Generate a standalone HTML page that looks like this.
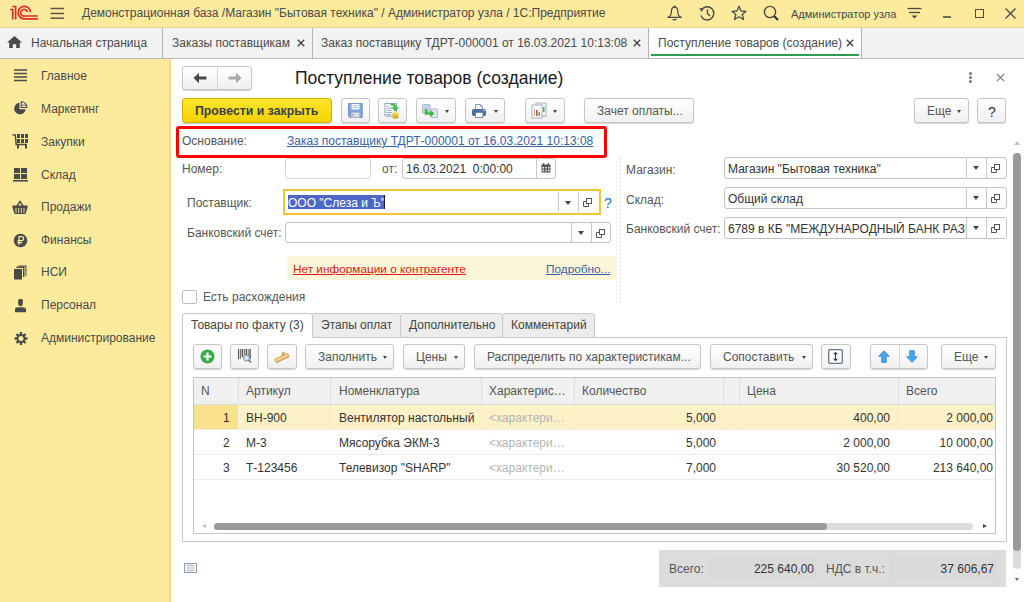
<!DOCTYPE html>
<html><head><meta charset="utf-8">
<style>
*{box-sizing:border-box;margin:0;padding:0}
html,body{width:1024px;height:602px;overflow:hidden;background:#fff;font-family:"Liberation Sans",sans-serif;font-size:12px;color:#4d4d4d}
.a{position:absolute}
.t{position:absolute;white-space:nowrap;line-height:14px}
#top{left:0;top:0;width:1024px;height:28px;background:#fceb9d;border-bottom:1px solid #e8d584}
#tabs{left:0;top:28px;width:1024px;height:31px;background:#f2f2f2;border-bottom:1px solid #b8b8b8}
.tsep{position:absolute;top:28px;width:1px;height:30px;background:#b4b4b4}
#side{left:0;top:59px;width:171px;height:543px;background:#fceb9d;border-right:2px solid #ebda8e}
.si{position:absolute;left:41px;white-space:nowrap;font-size:12px;color:#4a4a4a;line-height:14px}
.btn{position:absolute;border:1px solid #c6c6c6;border-radius:3px;background:linear-gradient(#fff,#f0f0f0);box-shadow:0 1px 1px rgba(0,0,0,.18)}
.inp{position:absolute;border:1px solid #c2c2c2;border-radius:3px;background:#fff}
.dd2{position:absolute;width:0;height:0;border-left:3px solid transparent;border-right:3px solid transparent;border-top:4px solid #444}
.dd{position:absolute;width:0;height:0;border-left:2.5px solid transparent;border-right:2.5px solid transparent;border-top:3px solid #444}
.lbl{position:absolute;white-space:nowrap;line-height:14px;color:#555}
</style></head><body>

<!-- TOP BAR -->
<div id="top" class="a"></div>
<svg class="a" style="left:9px;top:5px" width="32" height="16" viewBox="0 0 32 16">
  <g fill="none" stroke="#e0282e" stroke-width="1.7">
    <path d="M3.2 1.5H7.4M6.6 1.5V14.6M1.1 4.5H4.5M3.7 4.5V14.6"/>
    <path d="M21.6 7.2 A6.25 6.25 0 1 0 16.2 13.8 H28.9"/>
    <path d="M18.4 7.2 A3.4 3.4 0 1 0 16.2 11 H28.9"/>
  </g>
</svg>
<svg class="a" style="left:50px;top:7px" width="15" height="13" viewBox="0 0 15 13">
  <g stroke="#5b5444" stroke-width="1.5"><path d="M0.5 1.5H14"/><path d="M0.5 6.5H14"/><path d="M0.5 11.2H14"/></g>
</svg>
<div class="t" style="left:82px;top:6px;font-size:12px;color:#4a4a4a">Демонстрационная база /Магазин "Бытовая техника" / Администратор узла / 1С:Предприятие</div>

<!-- header icons -->
<svg class="a" style="left:667px;top:4px" width="16" height="17" viewBox="0 0 16 17"><path d="M4.4 8 C4.4 4.6 5.7 3.2 7.6 3.2 C9.5 3.2 10.8 4.6 10.8 8 C10.8 11 12.2 12.5 14.2 13.4 H1 C3 12.5 4.4 11 4.4 8Z" fill="none" stroke="#4a4a4a" stroke-width="1.2" stroke-linejoin="round"/><circle cx="7.6" cy="2.4" r="1" fill="#4a4a4a"/><path d="M5.3 15 A2.3 1.6 0 0 0 9.9 15Z" fill="#4a4a4a"/></svg>
<svg class="a" style="left:698px;top:5px" width="18" height="17" viewBox="0 0 18 17">
  <g fill="none" stroke="#4a4a4a" stroke-width="1.4"><path d="M3.5 5 A6.6 6.6 0 1 1 3 10.5"/><path d="M9.5 4.5V8.5L12 11"/></g>
  <path d="M1 3.5 L5.5 3 L4 7Z" fill="#4a4a4a"/>
</svg>
<svg class="a" style="left:731px;top:5px" width="16" height="16" viewBox="0 0 16 16">
  <path d="M8 1.2 L10 6 L15 6.3 L11.2 9.5 L12.5 14.5 L8 11.8 L3.5 14.5 L4.8 9.5 L1 6.3 L6 6Z" fill="none" stroke="#4a4a4a" stroke-width="1.3" stroke-linejoin="round"/>
</svg>
<svg class="a" style="left:763px;top:5px" width="17" height="17" viewBox="0 0 17 17">
  <circle cx="7" cy="7" r="5.6" fill="none" stroke="#4a4a4a" stroke-width="1.4"/><path d="M11 11 L15 15" stroke="#333" stroke-width="2.2"/>
</svg>
<div class="t" style="left:791px;top:7px;font-size:11px;color:#4a4a4a">Администратор узла</div>
<svg class="a" style="left:907px;top:7px" width="15" height="14" viewBox="0 0 15 14">
  <g stroke="#4a4a4a" stroke-width="1.3"><path d="M0.5 1.5H14.5"/><path d="M2 5.5H13"/></g><path d="M4.5 8.5H10.5L7.5 11.5Z" fill="#4a4a4a"/>
</svg>
<div class="a" style="left:943px;top:16px;width:8px;height:2px;background:#6e6a58"></div>
<div class="a" style="left:975px;top:9px;width:9px;height:9px;border:1.3px solid #4a4a4a"></div>
<svg class="a" style="left:1005px;top:8px" width="11" height="11" viewBox="0 0 11 11"><g stroke="#4a4a4a" stroke-width="1.3"><path d="M0.5 0.5L10.5 10.5M10.5 0.5L0.5 10.5"/></g></svg>

<!-- TABS -->
<div id="tabs" class="a"></div>
<div class="a" style="left:649px;top:28px;width:212px;height:31px;background:#fff;border-bottom:1px solid #b8b8b8"></div>
<div class="a" style="left:651px;top:54px;width:208px;height:2px;background:#2e9b4e"></div>
<div class="tsep" style="left:162px"></div>
<div class="tsep" style="left:312px"></div>
<div class="tsep" style="left:648px"></div>
<div class="tsep" style="left:861px"></div>
<svg class="a" style="left:7px;top:36px" width="15" height="12" viewBox="0 0 15 12"><path d="M7.5 0 L15 6.5 H12.8 V12 H9.2 V8.2 H5.8 V12 H2.2 V6.5 H0Z" fill="#4a4a4a"/></svg>
<div class="t" style="left:31px;top:36px;color:#4a4a4a">Начальная страница</div>
<div class="t" style="left:172px;top:36px;color:#4a4a4a">Заказы поставщикам</div>
<div class="t" style="left:321px;top:36px;color:#4a4a4a">Заказ поставщику ТДРТ-000001 от 16.03.2021 10:13:08</div>
<div class="t" style="left:658px;top:36px;color:#4a4a4a">Поступление товаров (создание)</div>
<svg class="a" style="left:297px;top:39px" width="8" height="8" viewBox="0 0 8 8"><path d="M0.8 0.8L7.2 7.2M7.2 0.8L0.8 7.2" stroke="#444" stroke-width="1.4"/></svg>
<svg class="a" style="left:633px;top:39px" width="8" height="8" viewBox="0 0 8 8"><path d="M0.8 0.8L7.2 7.2M7.2 0.8L0.8 7.2" stroke="#444" stroke-width="1.4"/></svg>
<svg class="a" style="left:846px;top:39px" width="8" height="8" viewBox="0 0 8 8"><path d="M0.8 0.8L7.2 7.2M7.2 0.8L0.8 7.2" stroke="#444" stroke-width="1.4"/></svg>

<!-- SIDEBAR -->
<div id="side" class="a"></div>
<div class="si" style="top:69px">Главное</div>
<div class="si" style="top:102px">Маркетинг</div>
<div class="si" style="top:135px">Закупки</div>
<div class="si" style="top:168px">Склад</div>
<div class="si" style="top:200px">Продажи</div>
<div class="si" style="top:233px">Финансы</div>
<div class="si" style="top:265px">НСИ</div>
<div class="si" style="top:298px">Персонал</div>
<div class="si" style="top:331px">Администрирование</div>
<svg class="a" style="left:13px;top:68px" width="15" height="15" viewBox="0 0 15 15"><g stroke="#4a4a4a" stroke-width="1.6"><path d="M1 2H14M1 5.5H14M1 9H14M1 12.5H14"/></g></svg>
<svg class="a" style="left:13px;top:101px" width="15" height="15" viewBox="0 0 15 15"><path d="M6.5 1.8 A5.8 5.8 0 1 0 12.7 8.3 H6.5Z" fill="#4a4a4a"/><path d="M8.2 0.8 A5.6 5.6 0 0 1 13.9 6.5 H8.2Z" fill="#f4f1e2" stroke="#4a4a4a" stroke-width="1.1"/><path d="M8.6 4.2H13.3" stroke="#4a4a4a" stroke-width="0.9"/></svg>
<svg class="a" style="left:12px;top:134px" width="16" height="15" viewBox="0 0 16 15"><path d="M0.5 1H3.3L4.2 10.6H15" fill="none" stroke="#4a4a4a" stroke-width="1.5"/><g fill="#4a4a4a"><rect x="5" y="0" width="3" height="4"/><rect x="9" y="0" width="3" height="4"/><rect x="13" y="0" width="3" height="4"/><rect x="5" y="5" width="3" height="4"/><rect x="9" y="5" width="3" height="4"/><rect x="13" y="5" width="3" height="4"/><rect x="5" y="11" width="2" height="3.5"/><rect x="13" y="11" width="2" height="3.5"/></g></svg>
<svg class="a" style="left:13px;top:167px" width="15" height="15" viewBox="0 0 15 15"><g fill="#4a4a4a"><rect x="1" y="1" width="6" height="5"/><rect x="8" y="1" width="6" height="5"/><rect x="1" y="7" width="6" height="5"/><rect x="8" y="7" width="6" height="5"/><rect x="0" y="13" width="15" height="1.6"/></g></svg>
<svg class="a" style="left:12px;top:200px" width="16" height="15" viewBox="0 0 16 15"><path d="M5 6 L8 1.5 L11 6" fill="none" stroke="#4a4a4a" stroke-width="1.4"/><path d="M0.5 5.5 H15.5 V7.5 L13.5 14 H2.5 L0.5 7.5Z" fill="#4a4a4a"/><g stroke="#fbea9b" stroke-width="0.9"><path d="M4 8V13M6.7 8V13M9.3 8V13M12 8V13"/></g></svg>
<svg class="a" style="left:13px;top:233px" width="15" height="15" viewBox="0 0 15 15"><circle cx="7.5" cy="7.5" r="6.8" fill="#4a4a4a"/><path d="M6 11.8V3.6H8.6A2 2 0 0 1 8.6 7.6H4.5M4.5 9.6H9" fill="none" stroke="#fbea9b" stroke-width="1.3"/></svg>
<svg class="a" style="left:13px;top:265px" width="15" height="15" viewBox="0 0 15 15"><g fill="#4a4a4a"><rect x="1" y="4" width="8" height="10.5"/><path d="M10 3H3.5V1.5H11.5V12H10Z"/><path d="M12.5 0.5H5.5V-0.5H13.5V10H12.5Z" transform="translate(0,1)"/></g></svg>
<svg class="a" style="left:13px;top:298px" width="15" height="15" viewBox="0 0 15 15"><path d="M5.2 2.2 C5.2 0.6 9.8 0.6 9.8 2.2 V5.6 C9.8 7.4 8.6 8.2 7.5 8.2 C6.4 8.2 5.2 7.4 5.2 5.6Z" fill="#4a4a4a"/><path d="M2 14.2 V11.6 C2 10 3.4 9.2 5 9.2 H10 C11.6 9.2 13 10 13 11.6 V14.2Z" fill="#4a4a4a"/></svg>
<svg class="a" style="left:13px;top:331px" width="16" height="15" viewBox="0 0 16 15"><circle cx="8" cy="7.5" r="3.5" fill="none" stroke="#4a4a4a" stroke-width="2"/><path d="M12.00 7.50L14.40 7.50M10.83 10.33L12.53 12.03M8.00 11.50L8.00 13.90M5.17 10.33L3.47 12.03M4.00 7.50L1.60 7.50M5.17 4.67L3.47 2.97M8.00 3.50L8.00 1.10M10.83 4.67L12.53 2.97" stroke="#4a4a4a" stroke-width="2.3"/></svg>


<!-- nav buttons -->
<div class="btn" style="left:182px;top:66px;width:70px;height:24px;"></div>
<div class="a" style="left:217px;top:67px;width:1px;height:22px;background:#d6d6d6"></div>
<svg class="a" style="left:193px;top:72px" width="14" height="12" viewBox="0 0 14 12"><path d="M0.5 6 L6 0.8 V4.6 H13.5 V7.4 H6 V11.2Z" fill="#4a4a4a"/></svg>
<svg class="a" style="left:228px;top:72px" width="14" height="12" viewBox="0 0 14 12"><path d="M13.5 6 L8 0.8 V4.6 H0.5 V7.4 H8 V11.2Z" fill="#a8a8a8"/></svg>
<div class="t" style="left:295px;top:68px;font-size:17.5px;line-height:20px;color:#1a1a1a">Поступление товаров (создание)</div>
<!-- menu dots & close -->
<g></g>
<div class="a" style="left:969px;top:72px;width:3px;height:3px;border-radius:50%;background:#777"></div>
<div class="a" style="left:969px;top:76px;width:3px;height:3px;border-radius:50%;background:#777"></div>
<div class="a" style="left:969px;top:80px;width:3px;height:3px;border-radius:50%;background:#777"></div>
<svg class="a" style="left:996px;top:73px" width="9" height="9" viewBox="0 0 9 9"><path d="M0.8 0.8L8.2 8.2M8.2 0.8L0.8 8.2" stroke="#777" stroke-width="1.2"/></svg>

<!-- command bar -->
<div class="a" style="left:182px;top:98px;width:150px;height:25px;border:1px solid #d4ae00;border-radius:3px;background:linear-gradient(#ffe62e,#f3d200);box-shadow:0 1px 1px rgba(0,0,0,.2)"></div>
<div class="t" style="left:195px;top:104px;font-weight:bold;font-size:12.3px;color:#3d3f48">Провести и закрыть</div>

<div class="btn" style="left:341px;top:98px;width:29px;height:25px"></div>
<svg class="a" style="left:348px;top:103px" width="15" height="15" viewBox="0 0 15 15"><path d="M0.5 0.5H14.3V14.5H2L0.5 13Z" fill="#7ea4d8" stroke="#6289c2" stroke-width="0.8"/><rect x="3.5" y="1" width="8" height="5.5" fill="#f4f7fc"/><g stroke="#9db6da" stroke-width="0.7"><path d="M4.5 2.7H10.5M4.5 4.4H10.5"/></g><rect x="3.5" y="9.5" width="8" height="5" fill="#dcdcd8"/><rect x="4.3" y="11.3" width="1.2" height="1.8" fill="#7ea4d8"/></svg>

<div class="btn" style="left:378px;top:98px;width:29px;height:25px"></div>
<svg class="a" style="left:384px;top:102px" width="17" height="17" viewBox="0 0 17 17"><path d="M1 1.5H12.5V14H1Z" fill="#fff" stroke="#8096b8" stroke-width="0.9"/><g stroke="#8e9bb0" stroke-width="0.9"><path d="M2.5 4H5.5M2.5 6.2H8M2.5 8.4H7.5M2.5 10.6H8M2.5 12.6H7"/></g><rect x="8.5" y="11" width="6" height="4.5" fill="#e0c23c"/><ellipse cx="11.5" cy="15.5" rx="3" ry="1.2" fill="#cfae2c"/><ellipse cx="11.5" cy="11" rx="3" ry="1.2" fill="#f4e07a"/><path d="M6.5 1.2C10.5 1.2 12.5 2.5 12.5 5.2H15.2L11.2 9.6L7 5.2H9.6C9.6 4 8.8 3.6 6.5 3.6Z" fill="#36c455"/></svg>

<div class="btn" style="left:416px;top:98px;width:40px;height:25px"></div>
<svg class="a" style="left:422px;top:104px" width="17" height="15" viewBox="0 0 17 15"><rect x="0.5" y="0.5" width="7.5" height="8.5" rx="1" fill="#cbd7e6" stroke="#9fb1c8" stroke-width="0.9"/><path d="M2 3H6M2 5H6" stroke="#a9b8cc" stroke-width="0.7"/><rect x="8.5" y="5" width="7" height="8.5" rx="1" fill="#dde6f0" stroke="#9fb1c8" stroke-width="0.9"/><path d="M2.8 5.2H5.6V8.6H8.4V6L12.4 9.6L8.4 13.2V10.8H2.8Z" fill="#3fb546"/></svg>
<div class="dd" style="left:445px;top:110px"></div>

<div class="btn" style="left:465px;top:98px;width:40px;height:25px"></div>
<svg class="a" style="left:472px;top:104px" width="15" height="14" viewBox="0 0 15 14"><path d="M3.5 0.5H8.3L10.5 2.7V5.5H3.5Z" fill="#fff" stroke="#7b8ca3" stroke-width="0.9"/><path d="M8.3 0.5V2.7H10.5" fill="none" stroke="#7b8ca3" stroke-width="0.7"/><rect x="0" y="5" width="14" height="7" rx="1.8" fill="#4b6f9d"/><rect x="3.5" y="8.5" width="7.5" height="5" fill="#fff" stroke="#6583aa" stroke-width="0.9"/><rect x="10.5" y="6" width="1.2" height="1" fill="#c9d8ea"/><rect x="12" y="6" width="1.2" height="1" fill="#c9d8ea"/></svg>
<div class="dd" style="left:494px;top:110px"></div>

<div class="btn" style="left:525px;top:98px;width:40px;height:25px"></div>
<svg class="a" style="left:531px;top:102px" width="16" height="17" viewBox="0 0 16 17"><rect x="5" y="1" width="10" height="13" fill="#f4f4f4" stroke="#9aa3ad" stroke-width="0.8"/><rect x="1" y="3" width="10" height="13" fill="#fafafa" stroke="#9aa3ad" stroke-width="0.8"/><rect x="3" y="7" width="1" height="7" fill="#b0b0b0"/><rect x="5" y="8" width="1.5" height="6" fill="#e04040"/><rect x="7.5" y="10" width="1.5" height="4" fill="#48b048"/><rect x="12" y="5" width="1.5" height="5" fill="#48b048"/></svg>
<div class="dd" style="left:553px;top:110px"></div>

<div class="btn" style="left:584px;top:98px;width:110px;height:25px"></div>
<div class="t" style="left:597px;top:104px;color:#555">Зачет оплаты...</div>

<div class="btn" style="left:914px;top:98px;width:55px;height:25px"></div>
<div class="t" style="left:927px;top:104px;color:#555">Еще</div>
<div class="dd" style="left:957px;top:110px"></div>
<div class="btn" style="left:977px;top:98px;width:29px;height:25px"></div>
<div class="t" style="left:988px;top:104px;font-size:14px;line-height:16px;color:#333">?</div>

<!-- red box -->
<div class="a" style="left:176px;top:126px;width:431px;height:32px;border:3px solid #f00;border-radius:3px"></div>
<div class="lbl" style="left:182px;top:134px">Основание:</div>
<div class="t" style="left:287px;top:134px;color:#3561a8;text-decoration:underline">Заказ поставщику ТДРТ-000001 от 16.03.2021 10:13:08</div>
<!-- left fields -->
<div class="lbl" style="left:182px;top:162px">Номер:</div>
<div class="inp" style="left:285px;top:158px;width:86px;height:21px;border-color:#d6d6d6"></div>
<div class="lbl" style="left:382px;top:162px">от:</div>
<div class="inp" style="left:402px;top:158px;width:154px;height:21px"></div>
<div class="a" style="left:536px;top:159px;width:1px;height:19px;background:#c8c8c8"></div>
<svg class="a" style="left:541px;top:163px" width="10" height="10" viewBox="0 0 10 10"><rect x="0.5" y="1.5" width="9" height="8" fill="#555"/><g fill="#fff"><rect x="1.5" y="4" width="1.5" height="1.5"/><rect x="4.2" y="4" width="1.5" height="1.5"/><rect x="7" y="4" width="1.5" height="1.5"/><rect x="1.5" y="6.8" width="1.5" height="1.5"/><rect x="4.2" y="6.8" width="1.5" height="1.5"/><rect x="7" y="6.8" width="1.5" height="1.5"/></g><rect x="2" y="0" width="1.3" height="2.5" fill="#555"/><rect x="6.7" y="0" width="1.3" height="2.5" fill="#555"/></svg>
<div class="t" style="left:406px;top:162px;color:#333">16.03.2021&nbsp; 0:00:00</div>

<div class="lbl" style="left:187px;top:196px">Поставщик:</div>
<div class="a" style="left:283px;top:189px;width:318px;height:26px;border:2px solid #f4c531;background:#fff"></div>
<div class="a" style="left:288px;top:195px;width:97px;height:14px;background:#4e67c6"></div>
<div class="t" style="left:288px;top:196px;color:#fff">ООО "Слеза и Ъ"</div>
<div class="a" style="left:384px;top:195px;width:1px;height:14px;background:#1a1a40"></div>
<div class="a" style="left:558px;top:193px;width:1px;height:18px;background:#c8c8c8"></div>
<div class="dd2" style="left:565px;top:201px"></div>
<div class="a" style="left:578px;top:193px;width:1px;height:18px;background:#c8c8c8"></div>
<svg class="a" style="left:583px;top:198px" width="10" height="10" viewBox="0 0 10 10"><g fill="none" stroke="#555" stroke-width="1"><rect x="3.5" y="0.5" width="5" height="5"/><path d="M3.5 3.5H0.5V8.5H5.5V5.5"/></g></svg>
<div class="t" style="left:604px;top:195px;font-size:14px;line-height:16px;color:#1a72c2">?</div>

<div class="lbl" style="left:187px;top:226px">Банковский счет:</div>
<div class="inp" style="left:285px;top:222px;width:326px;height:21px"></div>
<div class="a" style="left:571px;top:223px;width:1px;height:19px;background:#c8c8c8"></div>
<div class="dd2" style="left:578px;top:231px"></div>
<div class="a" style="left:591px;top:223px;width:1px;height:19px;background:#c8c8c8"></div>
<svg class="a" style="left:596px;top:229px" width="10" height="10" viewBox="0 0 10 10"><g fill="none" stroke="#555" stroke-width="1"><rect x="3.5" y="0.5" width="5" height="5"/><path d="M3.5 3.5H0.5V8.5H5.5V5.5"/></g></svg>

<div class="a" style="left:287px;top:256px;width:329px;height:24px;background:#fdf6d8"></div>
<div class="t" style="left:293px;top:262px;font-size:11.8px;color:#e3160f;text-decoration:underline">Нет информации о контрагенте</div>
<div class="t" style="left:546px;top:262px;font-size:11.8px;color:#3561a8;text-decoration:underline">Подробно...</div>

<div class="a" style="left:182px;top:290px;width:15px;height:14px;border:1px solid #bdbdbd;border-radius:2px;background:#fff"></div>
<div class="lbl" style="left:203px;top:290px">Есть расхождения</div>

<!-- dotted separator -->
<div class="a" style="left:620px;top:157px;width:1px;height:148px;background:repeating-linear-gradient(#d9d9d9 0 2px,transparent 2px 4px)"></div>

<!-- right fields -->
<div class="lbl" style="left:626px;top:163px">Магазин:</div>
<div class="inp" style="left:724px;top:157px;width:283px;height:22px"></div>
<div class="t" style="left:728px;top:162px;color:#333">Магазин "Бытовая техника"</div>
<div class="a" style="left:966px;top:158px;width:1px;height:20px;background:#c8c8c8"></div>
<div class="dd2" style="left:973px;top:166px"></div>
<div class="a" style="left:986px;top:158px;width:1px;height:20px;background:#c8c8c8"></div>
<svg class="a" style="left:991px;top:164px" width="10" height="10" viewBox="0 0 10 10"><g fill="none" stroke="#555" stroke-width="1"><rect x="3.5" y="0.5" width="5" height="5"/><path d="M3.5 3.5H0.5V8.5H5.5V5.5"/></g></svg>

<div class="lbl" style="left:626px;top:193px">Склад:</div>
<div class="inp" style="left:724px;top:187px;width:283px;height:22px"></div>
<div class="t" style="left:728px;top:192px;color:#333">Общий склад</div>
<div class="a" style="left:966px;top:188px;width:1px;height:20px;background:#c8c8c8"></div>
<div class="dd2" style="left:973px;top:196px"></div>
<div class="a" style="left:986px;top:188px;width:1px;height:20px;background:#c8c8c8"></div>
<svg class="a" style="left:991px;top:194px" width="10" height="10" viewBox="0 0 10 10"><g fill="none" stroke="#555" stroke-width="1"><rect x="3.5" y="0.5" width="5" height="5"/><path d="M3.5 3.5H0.5V8.5H5.5V5.5"/></g></svg>

<div class="lbl" style="left:626px;top:222px">Банковский счет:</div>
<div class="inp" style="left:724px;top:217px;width:283px;height:22px"></div>
<div class="a" style="left:728px;top:222px;width:238px;overflow:hidden;white-space:nowrap;line-height:14px;color:#333">6789 в КБ "МЕЖДУНАРОДНЫЙ БАНК РАЗВИТИЯ"</div>
<div class="a" style="left:966px;top:218px;width:1px;height:20px;background:#c8c8c8"></div>
<div class="dd2" style="left:973px;top:226px"></div>
<div class="a" style="left:986px;top:218px;width:1px;height:20px;background:#c8c8c8"></div>
<svg class="a" style="left:991px;top:224px" width="10" height="10" viewBox="0 0 10 10"><g fill="none" stroke="#555" stroke-width="1"><rect x="3.5" y="0.5" width="5" height="5"/><path d="M3.5 3.5H0.5V8.5H5.5V5.5"/></g></svg>

<!-- tab panel -->
<div class="a" style="left:182px;top:337px;width:825px;height:205px;border:1px solid #c8c8c8;border-top:1px solid #c8c8c8;background:#fff"></div>
<div class="a" style="left:182px;top:313px;width:131px;height:25px;border:1px solid #c8c8c8;border-bottom:none;border-radius:3px 3px 0 0;background:#fff"></div>
<div class="a" style="left:312px;top:313px;width:89px;height:25px;border:1px solid #c8c8c8;background:#ececec;border-radius:3px 3px 0 0"></div>
<div class="a" style="left:400px;top:313px;width:103px;height:25px;border:1px solid #c8c8c8;background:#ececec;border-radius:3px 3px 0 0"></div>
<div class="a" style="left:502px;top:313px;width:93px;height:25px;border:1px solid #c8c8c8;background:#ececec;border-radius:3px 3px 0 0"></div>
<div class="lbl" style="left:191px;top:318px;color:#444">Товары по факту (3)</div>
<div class="lbl" style="left:321px;top:318px;color:#444">Этапы оплат</div>
<div class="lbl" style="left:409px;top:318px;color:#444">Дополнительно</div>
<div class="lbl" style="left:511px;top:318px;color:#444">Комментарий</div>

<!-- table command bar -->
<div class="btn" style="left:193px;top:344px;width:29px;height:25px"></div>
<svg class="a" style="left:200px;top:349px" width="15" height="15" viewBox="0 0 15 15"><circle cx="7.5" cy="7.5" r="7" fill="#3aaa48"/><path d="M7.5 3.5V11.5M3.5 7.5H11.5" stroke="#fff" stroke-width="2.2"/></svg>
<div class="btn" style="left:230px;top:344px;width:29px;height:25px"></div>
<svg class="a" style="left:237px;top:348px" width="16" height="16" viewBox="0 0 16 16"><g fill="#555"><rect x="1" y="1" width="1.2" height="10"/><rect x="3" y="1" width="0.8" height="10"/><rect x="4.6" y="1" width="1.6" height="8"/><rect x="7" y="1" width="0.8" height="6"/><rect x="8.6" y="1" width="1.4" height="6"/><rect x="10.8" y="1" width="0.8" height="8"/><rect x="12.4" y="1" width="1.4" height="10"/></g><circle cx="9.5" cy="10" r="3" fill="#cfe3f7" stroke="#6d8fb5" stroke-width="1"/><path d="M11.5 12L14 14.5" stroke="#8a6a3a" stroke-width="1.6"/></svg>
<div class="btn" style="left:267px;top:344px;width:30px;height:25px"></div>
<svg class="a" style="left:274px;top:349px" width="16" height="15" viewBox="0 0 16 15"><path d="M7.2 6.2 L8.8 2.6 L11 3.4 L10 6Z" fill="#d9a54e"/><path d="M0.7 10.2 L13.6 4.2 L15.2 7.8 L2.3 13.8Z" fill="#ecc77c" stroke="#c9923c" stroke-width="0.7"/><path d="M2 11.6 L14 6" stroke="#f9e6b8" stroke-width="0.8"/><path d="M2.6 13 L14.5 7.4" stroke="#c9923c" stroke-width="0.6"/></svg>
<div class="btn" style="left:305px;top:344px;width:89px;height:25px"></div>
<div class="lbl" style="left:318px;top:350px">Заполнить</div>
<div class="dd" style="left:383px;top:356px"></div>
<div class="btn" style="left:403px;top:344px;width:62px;height:25px"></div>
<div class="lbl" style="left:416px;top:350px">Цены</div>
<div class="dd" style="left:454px;top:356px"></div>
<div class="btn" style="left:474px;top:344px;width:227px;height:25px"></div>
<div class="lbl" style="left:487px;top:350px">Распределить по характеристикам...</div>
<div class="btn" style="left:710px;top:344px;width:103px;height:25px"></div>
<div class="lbl" style="left:723px;top:350px">Сопоставить</div>
<div class="dd" style="left:802px;top:356px"></div>
<div class="btn" style="left:821px;top:344px;width:30px;height:25px"></div>
<svg class="a" style="left:828px;top:349px" width="15" height="15" viewBox="0 0 15 15"><rect x="0.7" y="0.7" width="13.6" height="13.6" rx="1" fill="#fff" stroke="#62768c" stroke-width="1.3"/><path d="M7.5 3.5V11.5" stroke="#2f3f55" stroke-width="1"/><path d="M5 5.3L7.5 2.8L10 5.3Z M5 9.7L7.5 12.2L10 9.7Z" fill="#2f3f55"/></svg>
<div class="btn" style="left:870px;top:344px;width:58px;height:25px"></div>
<div class="a" style="left:899px;top:345px;width:1px;height:23px;background:#d6d6d6"></div>
<svg class="a" style="left:878px;top:350px" width="12" height="13" viewBox="0 0 12 13"><path d="M6 0.7L11.3 6.2H8.3V12.3H3.7V6.2H0.7Z" fill="#45a6ec" stroke="#2f7fc0" stroke-width="0.8" stroke-linejoin="round"/></svg>
<svg class="a" style="left:906px;top:350px" width="12" height="13" viewBox="0 0 12 13"><path d="M6 12.3L11.3 6.8H8.3V0.7H3.7V6.8H0.7Z" fill="#45a6ec" stroke="#2f7fc0" stroke-width="0.8" stroke-linejoin="round"/></svg>
<div class="btn" style="left:941px;top:344px;width:55px;height:25px"></div>
<div class="lbl" style="left:954px;top:350px">Еще</div>
<div class="dd" style="left:984px;top:356px"></div>

<!-- table -->
<div class="a" style="left:193px;top:377px;width:803px;height:157px;border:1px solid #c4c4c4;background:#fff"></div>
<div class="a" style="left:194px;top:378px;width:801px;height:27px;background:#f0f0f0;border-bottom:1px solid #dcdcdc"></div>
<div class="a" style="left:238px;top:378px;width:1px;height:26px;background:#dcdcdc"></div>
<div class="a" style="left:330px;top:378px;width:1px;height:26px;background:#dcdcdc"></div>
<div class="a" style="left:481px;top:378px;width:1px;height:26px;background:#dcdcdc"></div>
<div class="a" style="left:574px;top:378px;width:1px;height:26px;background:#dcdcdc"></div>
<div class="a" style="left:723px;top:378px;width:1px;height:26px;background:#dcdcdc"></div>
<div class="a" style="left:739px;top:378px;width:1px;height:26px;background:#dcdcdc"></div>
<div class="a" style="left:898px;top:378px;width:1px;height:26px;background:#dcdcdc"></div>
<div class="lbl" style="left:201px;top:384px">N</div>
<div class="lbl" style="left:246px;top:384px">Артикул</div>
<div class="lbl" style="left:339px;top:384px">Номенклатура</div>
<div class="lbl" style="left:489px;top:384px">Характерис…</div>
<div class="lbl" style="left:582px;top:384px">Количество</div>
<div class="lbl" style="left:747px;top:384px">Цена</div>
<div class="lbl" style="left:906px;top:384px">Всего</div>

<!-- row1 selected -->
<div class="a" style="left:194px;top:405px;width:801px;height:24px;background:#fdf1c8"></div>
<div class="a" style="left:194px;top:405px;width:44px;height:24px;background:#fae18c"></div>
<div class="a" style="left:238px;top:405px;width:1px;height:24px;background:#fff8e6"></div>
<div class="a" style="left:330px;top:405px;width:1px;height:24px;background:#f9eccb"></div>
<div class="a" style="left:481px;top:405px;width:1px;height:24px;background:#f9eccb"></div>
<div class="a" style="left:574px;top:405px;width:1px;height:24px;background:#f9eccb"></div>
<div class="a" style="left:723px;top:405px;width:1px;height:24px;background:#f9eccb"></div>
<div class="a" style="left:739px;top:405px;width:1px;height:24px;background:#f9eccb"></div>
<div class="a" style="left:898px;top:405px;width:1px;height:24px;background:#f9eccb"></div>
<div class="a" style="left:194px;top:429px;width:801px;height:1px;background:#ebebeb"></div>
<div class="a" style="left:194px;top:454px;width:801px;height:1px;background:#ebebeb"></div>
<div class="a" style="left:194px;top:479px;width:801px;height:1px;background:#ebebeb"></div>

<div class="lbl" style="left:223px;top:411px;color:#333">1</div>
<div class="lbl" style="left:246px;top:411px;color:#333">ВН-900</div>
<div class="lbl" style="left:339px;top:411px;color:#333">Вентилятор настольный</div>
<div class="lbl" style="left:489px;top:411px;color:#b4b4b4">&lt;характери…</div>
<div class="lbl" style="left:616px;top:411px;width:100px;text-align:right;color:#333">5,000</div>
<div class="lbl" style="left:790px;top:411px;width:100px;text-align:right;color:#333">400,00</div>
<div class="lbl" style="left:893px;top:411px;width:100px;text-align:right;color:#333">2 000,00</div>

<div class="lbl" style="left:223px;top:436px;color:#333">2</div>
<div class="lbl" style="left:246px;top:436px;color:#333">М-3</div>
<div class="lbl" style="left:339px;top:436px;color:#333">Мясорубка ЭКМ-3</div>
<div class="lbl" style="left:489px;top:436px;color:#b4b4b4">&lt;характери…</div>
<div class="lbl" style="left:616px;top:436px;width:100px;text-align:right;color:#333">5,000</div>
<div class="lbl" style="left:790px;top:436px;width:100px;text-align:right;color:#333">2 000,00</div>
<div class="lbl" style="left:893px;top:436px;width:100px;text-align:right;color:#333">10 000,00</div>

<div class="lbl" style="left:223px;top:461px;color:#333">3</div>
<div class="lbl" style="left:246px;top:461px;color:#333">Т-123456</div>
<div class="lbl" style="left:339px;top:461px;color:#333">Телевизор "SHARP"</div>
<div class="lbl" style="left:489px;top:461px;color:#b4b4b4">&lt;характери…</div>
<div class="lbl" style="left:616px;top:461px;width:100px;text-align:right;color:#333">7,000</div>
<div class="lbl" style="left:790px;top:461px;width:100px;text-align:right;color:#333">30 520,00</div>
<div class="lbl" style="left:893px;top:461px;width:100px;text-align:right;color:#333">213 640,00</div>

<!-- h scrollbar -->
<div class="a" style="left:214px;top:523px;width:759px;height:7px;border-radius:4px;background:#dcdcdc"></div>
<div class="a" style="left:214px;top:523px;width:613px;height:7px;border-radius:4px;background:#9a9a9a"></div>
<div class="a" style="left:202px;top:524px;width:0;height:0;border-top:2.5px solid transparent;border-bottom:2.5px solid transparent;border-right:4px solid #c0c0c0"></div>
<div class="a" style="left:983px;top:524px;width:0;height:0;border-top:2.5px solid transparent;border-bottom:2.5px solid transparent;border-left:4px solid #444"></div>

<!-- footer -->
<svg class="a" style="left:184px;top:563px" width="13" height="10" viewBox="0 0 13 10"><rect x="0.5" y="0.5" width="12" height="9" fill="#f2f4f8" stroke="#8e9db4" stroke-width="1"/><g stroke="#a9b2c0" stroke-width="1"><path d="M3 2.5H10M3 5H10M3 7.5H10"/></g></svg>
<div class="a" style="left:659px;top:550px;width:347px;height:37px;background:#dcdcdc"></div>
<div class="lbl" style="left:669px;top:562px">Всего:</div>
<div class="a" style="left:710px;top:558px;width:106px;height:20px;border:1px solid #d6d6d6;border-radius:2px;background:#dadada"></div>
<div class="lbl" style="left:713px;top:562px;width:101px;text-align:right;color:#333">225 640,00</div>
<div class="lbl" style="left:826px;top:562px">НДС в т.ч.:</div>
<div class="a" style="left:890px;top:558px;width:106px;height:20px;border:1px solid #d6d6d6;border-radius:2px;background:#dadada"></div>
<div class="lbl" style="left:893px;top:562px;width:101px;text-align:right;color:#333">37 606,67</div>

<!-- v scrollbar -->
<div class="a" style="left:1013px;top:153px;width:8px;height:416px;border-radius:4px;background:#dcdcdc"></div>
<div class="a" style="left:1013px;top:153px;width:8px;height:398px;border-radius:4px;background:#9a9a9a"></div>
<div class="a" style="left:1014px;top:141px;width:0;height:0;border-left:3px solid transparent;border-right:3px solid transparent;border-bottom:4px solid #c0c0c0"></div>
<div class="a" style="left:1015px;top:578px;width:0;height:0;border-left:2.5px solid transparent;border-right:2.5px solid transparent;border-top:3.5px solid #666"></div>


</body></html>
